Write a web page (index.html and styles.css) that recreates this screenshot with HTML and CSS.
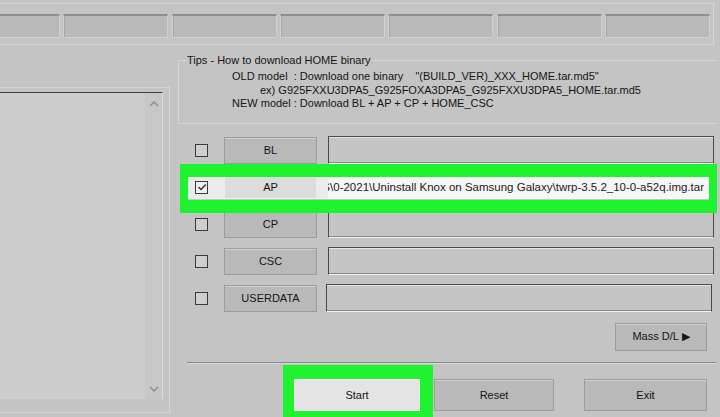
FILE: index.html
```html
<!DOCTYPE html>
<html>
<head>
<meta charset="utf-8">
<link rel="stylesheet" href="styles.css">
</head>
<body>
<div class="app">
  <div class="top">
    <div class="topframe">
      <div class="slot"></div><div class="slot"></div><div class="slot"></div><div class="slot"></div><div class="slot"></div><div class="slot"></div><div class="slot"></div>
    </div>
  </div>
  <div class="main">
    <div class="left">
      <div class="log">
        <div class="logtext"></div>
        <div class="scroll">
          <svg class="arrow" viewBox="0 0 10 6" width="10" height="6"><path d="M1 5 L5 1 L9 5" fill="none" stroke="#8a8a8a" stroke-width="1.3"/></svg>
          <svg class="arrow" viewBox="0 0 10 6" width="10" height="6"><path d="M1 1 L5 5 L9 1" fill="none" stroke="#8a8a8a" stroke-width="1.3"/></svg>
        </div>
      </div>
    </div>
    <div class="right">
      <fieldset class="tips">
        <legend>Tips - How to download HOME binary</legend>
        <div class="tline">OLD model  : Download one binary    "(BUILD_VER)_XXX_HOME.tar.md5"</div>
        <div class="tline ex">ex) G925FXXU3DPA5_G925FOXA3DPA5_G925FXXU3DPA5_HOME.tar.md5</div>
        <div class="tline">NEW model : Download BL + AP + CP + HOME_CSC</div>
      </fieldset>
      <div class="rows">
        <div class="row">
          <span class="cb"></span>
          <button class="fbtn">BL</button>
          <div class="field"></div>
        </div>
        <div class="row sel">
          <span class="hl"></span>
          <span class="cb on"><svg viewBox="0 0 10 10" width="10" height="10"><path d="M1.5 5 L4 7.5 L8.8 2.5" fill="none" stroke="#333" stroke-width="1.4"/></svg></span>
          <button class="fbtn">AP</button>
          <div class="field"><span class="path">C:\Users\Admin\DOWNLOADS\0-2021\Uninstall Knox on Samsung Galaxy\twrp-3.5.2_10-0-a52q.img.tar</span></div>
        </div>
        <div class="row">
          <span class="cb"></span>
          <button class="fbtn">CP</button>
          <div class="field"></div>
        </div>
        <div class="row">
          <span class="cb"></span>
          <button class="fbtn">CSC</button>
          <div class="field"></div>
        </div>
        <div class="row">
          <span class="cb"></span>
          <button class="fbtn">USERDATA</button>
          <div class="field wide"></div>
        </div>
      </div>
      <div class="massrow"><button class="btn mass">Mass D/L ▶</button></div>
      <div class="sep"></div>
      <div class="actions">
        <div class="startwrap">
          <span class="hl2"></span>
          <button class="btn start">Start</button>
        </div>
        <button class="btn reset">Reset</button>
        <button class="btn exit">Exit</button>
      </div>
    </div>
  </div>
</div>
</body>
</html>
```
FILE: styles.css
```css
* { box-sizing: border-box; }
html, body { margin: 0; padding: 0; }
body {
  width: 720px;
  height: 417px;
  overflow: hidden;
  background: #c4c4c4;
  font-family: "Liberation Sans", Arial, sans-serif;
  font-size: 11px;
  color: #151515;
}
.app { width: 720px; height: 417px; overflow: hidden; }

.top { height: 50px; padding-top: 3px; }
.topframe {
  height: 42px;
  margin-right: 6px;
  border-top: 1px solid #d9d9d9;
  border-right: 1px solid #d9d9d9;
  border-bottom: 1px solid #d2d2d2;
  padding-top: 10px;
  display: grid;
  grid-template-columns: 60px repeat(6, 105px);
  column-gap: 3.33px;
}
.slot {
  height: 24px;
  background: #b9b9b9;
  border: 1px solid #d0d0d0;
  border-top: 2px solid #8f8f8f;
  box-shadow: inset 1px 0 #a8a8a8;
}
.slot:first-child { border-left: none; box-shadow: none; }

.main { display: flex; height: 367px; }
.left {
  width: 170px;
  margin-top: 37px;
  height: 326px;
  border-top: 1px solid #d5d5d5;
  border-right: 1px solid #d8d8d8;
  border-bottom: 1px solid #d5d5d5;
  padding: 4px 6px 0 0;
}
.log {
  height: 307px;
  display: flex;
  background: #cdcdcd;
  border-top: 1px solid #3e3e3e;
  border-right: 1px solid #dcdcdc;
}
.logtext { flex: 1; }
.scroll {
  width: 17px;
  background: #c7c7c7;
  display: flex;
  flex-direction: column;
  justify-content: space-between;
  align-items: center;
  padding: 8px 0 7px;
}

.right { width: 539px; margin-left: 8px; padding-top: 4px; }

.tips {
  margin: 0;
  padding: 3px 0 12px 6px;
  border: 1px solid #d6d6d6;
  border-right: none;
  min-width: 0;
}
.tips legend {
  padding: 0 1px;
  margin-left: 1px;
  line-height: 13px;
}
.tline { white-space: pre; line-height: 13.5px; margin-left: 47px; }
.tline.ex { margin-left: 75px; }

.rows { margin-top: 13px; display: flex; flex-direction: column; gap: 10px; }
.row {
  display: flex;
  align-items: center;
  height: 27px;
  padding-left: 17px;
  position: relative;
}
.cb {
  width: 13px;
  height: 13px;
  border: 1.5px solid #3a3a3a;
  background: #cfcfcf;
  display: flex;
  align-items: center;
  justify-content: center;
  flex: none;
}
.cb.on { background: #f0f0f0; }
.fbtn {
  margin-left: 16px;
  width: 93px;
  height: 27px;
  flex: none;
  font: inherit;
  color: inherit;
  background: #b9b9b9;
  border: 1px solid #9c9c9c;
  box-shadow: inset 0 1px #cfcfcf;
  padding: 0;
}
.field {
  margin-left: 11px;
  width: 386px;
  height: 28px;
  flex: none;
  background: #c5c5c5;
  border: 1px solid #4a4a4a;
  border-bottom-color: #f2f2f2;
  box-shadow: inset 0 -1px #8a8a8a, inset 0 1px #e6e6e6;
  overflow: hidden;
  display: flex;
  justify-content: flex-end;
  align-items: center;
}
.field.wide { margin-left: 9px; width: 386px; }

.row.sel { z-index: 2; }
.row.sel::before {
  content: "";
  position: absolute;
  left: 10px; right: 7px; top: 3px; bottom: 2px;
  background: #ebebeb;
}
.row.sel .cb, .row.sel .fbtn, .row.sel .field { position: relative; }
.row.sel .fbtn { background: #dcdcdc; border-color: #ececec; box-shadow: none; height: 24px; }
.row.sel .field { background: #f6f6f6; border: none; box-shadow: none; height: 24px; width: 380px; padding-right: 4px; font-size: 11.5px; }
.path { white-space: nowrap; color: #1a1a1a; }
.hl {
  position: absolute;
  left: 2px; right: 0; top: -10px; bottom: -12px;
  border: 13px solid #1ff22f;
  border-left-width: 8px;
  border-right-width: 8px;
  z-index: 3;
}

.massrow { display: flex; justify-content: flex-end; margin-top: 11px; padding-right: 10px; }
.btn {
  font: inherit;
  color: inherit;
  background: #b9b9b9;
  border: 1px solid #9c9c9c;
  box-shadow: inset 0 1px #cfcfcf;
  padding: 0;
}
.mass { width: 92px; height: 28px; }

.sep {
  margin: 11px 1px 0 9px;
  height: 2px;
  border-top: 1px solid #8a8a8a;
  border-bottom: 1px solid #d8d8d8;
}

.actions { display: flex; margin-top: 15px; align-items: flex-start; }
.startwrap { position: relative; margin-left: 116px; width: 126px; height: 32px; }
.hl2 {
  position: absolute;
  left: -11px; right: -13px; top: -14px; bottom: -20px;
  background: #1ff22f;
}
.start {
  position: relative;
  width: 126px;
  height: 32px;
  background: #e4e4e4;
  border: 1px solid #f8f8f8;
  box-shadow: none;
}
.reset { margin-left: 14px; width: 120px; height: 32px; }
.exit { margin-left: 30px; width: 123px; height: 32px; }
```
